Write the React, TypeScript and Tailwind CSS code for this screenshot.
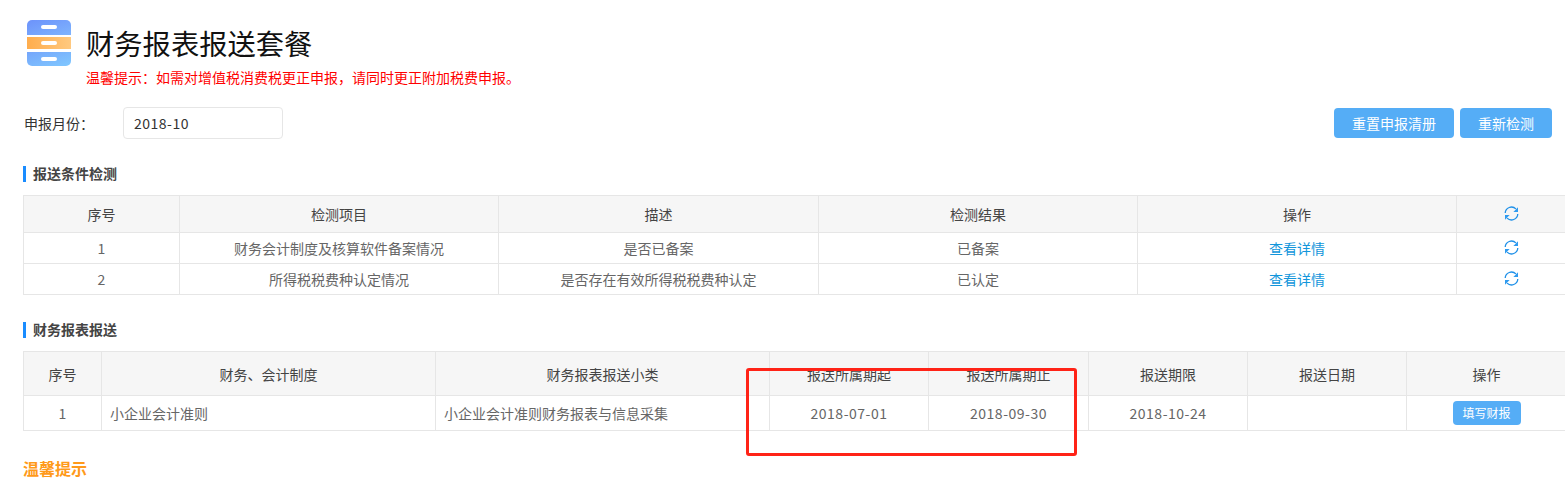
import React from "react";

const font = { fontFamily: '"Noto Sans CJK SC", "Noto Sans", sans-serif' };

function Refresh() {
  return (
    <svg width="15" height="15" viewBox="0 0 15 15" fill="none" stroke="#1e90e8" strokeWidth="1.3" className="-mt-[2px]">
      <path d="M1.2 7A6.3 6.3 0 0 1 11.9 2.9" />
      <path d="M13.8 8A6.3 6.3 0 0 1 3.1 12.1" />
      <path d="M14 1.3V6H9.4Z" fill="#2f9bf0" stroke="none" />
      <path d="M1 13.7V9H5.6Z" fill="#2f9bf0" stroke="none" />
    </svg>
  );
}

function Logo() {
  return (
    <svg width="44" height="46" viewBox="0 0 44 46" className="shrink-0">
      <defs>
        <linearGradient id="a" x1="0" y1="0" x2="1" y2="1">
          <stop offset="0" stopColor="#6c92fb" />
          <stop offset="1" stopColor="#7fb4fd" />
        </linearGradient>
        <linearGradient id="b" x1="0" y1="0" x2="1" y2="0">
          <stop offset="0" stopColor="#ffad4d" />
          <stop offset="1" stopColor="#ffc97f" />
        </linearGradient>
        <linearGradient id="c" x1="0" y1="0" x2="1" y2="1">
          <stop offset="0" stopColor="#75a6fb" />
          <stop offset="1" stopColor="#80c8ff" />
        </linearGradient>
      </defs>
      <path d="M0 15V5a5 5 0 0 1 5-5h34a5 5 0 0 1 5 5v10Z" fill="url(#a)" />
      <rect y="17" width="44" height="12" fill="url(#b)" />
      <path d="M0 32h44v9a5 5 0 0 1-5 5H5a5 5 0 0 1-5-5Z" fill="url(#c)" />
      <rect x="14" y="5" width="16" height="4" rx="2" fill="#fff" />
      <rect x="14" y="21" width="16" height="4" rx="2" fill="#fff" />
      <rect x="14" y="37" width="16" height="4" rx="2" fill="#fff" />
    </svg>
  );
}

function SectionTitle({ children, className }: { children: React.ReactNode; className: string }) {
  return (
    <div className={`flex h-4 items-center border-l-[3px] border-[#1a8cff] pb-[2px] pl-[7px] text-sm font-bold leading-4 text-[#444] ${className}`}>
      {children}
    </div>
  );
}

const cellBorder = "flex items-center justify-center border-r border-[#e6e6e6] last:border-r-0";

function CheckRow({ cells, head }: { cells: React.ReactNode[]; head?: boolean }) {
  return (
    <div
      className={`grid grid-cols-[156px_319px_320px_319px_319px_108px] border-b border-[#e6e6e6] ${
        head ? "h-[37px] bg-[#f6f6f6] text-[#444]" : "h-[31px] text-[#666]"
      }`}
    >
      {cells.map((c, i) => (
        <div key={i} className={cellBorder}>
          {c}
        </div>
      ))}
    </div>
  );
}

function ReportRow({ cells, head }: { cells: React.ReactNode[]; head?: boolean }) {
  return (
    <div
      className={`grid grid-cols-[78px_334px_334px_159px_160px_159px_159px_159px] border-b border-[#e6e6e6] ${
        head ? "h-[44px] bg-[#f6f6f6] text-[#444]" : "h-[35px] text-[#666]"
      }`}
    >
      {cells.map((c, i) => (
        <div key={i} className={cellBorder}>
          {c}
        </div>
      ))}
    </div>
  );
}

const Link = ({ children }: { children: React.ReactNode }) => <span className="text-[#1296db]">{children}</span>;
const Num = ({ children }: { children: React.ReactNode }) => <span className="tracking-[0.5px]">{children}</span>;

export default function App() {
  return (
    <div style={font} className="relative h-[484px] w-[1565px] overflow-hidden bg-white text-sm">
      <div className="flex pl-[27px] pt-5">
        <Logo />
        <div className="ml-[15px] pt-[3px]">
          <div className="text-[28.3px] font-normal leading-10 text-[#111]">财务报表报送套餐</div>
          <div className="mt-[5px] pb-px text-sm leading-[18px] text-[#ff0000]">
            {"温馨提示\uFF1A如需对增值税消费税更正申报\uFF0C请同时更正附加税费申报\u3002"}
          </div>
        </div>
      </div>

      <div className="mt-5 flex h-[32px] items-center pl-6 pr-[13px]">
        <span className="w-[99px] text-[#333]">{"申报月份\uFF1A"}</span>
        <div className="flex h-[32px] w-[160px] items-center rounded-sm border border-[#e6e6e6] px-[10px] tracking-[0.5px] text-[#333]">
          2018-10
        </div>
        <div className="ml-auto flex gap-[6px]">
          <button className="h-[30px] w-[120px] rounded-sm bg-[#55adf6] text-white">重置申报清册</button>
          <button className="h-[30px] w-[92px] rounded-sm bg-[#55adf6] text-white">重新检测</button>
        </div>
      </div>

      <SectionTitle className="ml-[23px] mt-[27px]">报送条件检测</SectionTitle>

      <div className="ml-[23px] mt-[13px] w-[1542px] border-l border-t border-[#e6e6e6]">
        <CheckRow head cells={["序号", "检测项目", "描述", "检测结果", "操作", <Refresh />]} />
        <CheckRow cells={["1", "财务会计制度及核算软件备案情况", "是否已备案", "已备案", <Link>查看详情</Link>, <Refresh />]} />
        <CheckRow cells={["2", "所得税税费种认定情况", "是否存在有效所得税税费种认定", "已认定", <Link>查看详情</Link>, <Refresh />]} />
      </div>

      <SectionTitle className="ml-[23px] mt-[27px]">财务报表报送</SectionTitle>

      <div className="ml-[23px] mt-[13px] w-[1542px] border-l border-t border-[#e6e6e6]">
        <ReportRow head cells={["序号", "财务、会计制度", "财务报表报送小类", "报送所属期起", "报送所属期止", "报送期限", "报送日期", "操作"]} />
        <ReportRow
          cells={[
            "1",
            <span className="w-full pl-2">小企业会计准则</span>,
            <span className="w-full pl-2">小企业会计准则财务报表与信息采集</span>,
            <Num>2018-07-01</Num>,
            <Num>2018-09-30</Num>,
            <Num>2018-10-24</Num>,
            "",
            <span className="-mt-px flex h-6 w-[68px] items-center justify-center rounded-sm bg-[#55adf6] text-xs text-white">填写财报</span>,
          ]}
        />
      </div>

      <div className="ml-[23px] mt-[25px] text-base font-bold leading-6 text-[#ff9a1a]">温馨提示</div>

      <div className="absolute left-[746px] top-[368px] h-[88px] w-[331px] rounded-[3px] border-[3px] border-[#ff2317]" />
    </div>
  );
}
